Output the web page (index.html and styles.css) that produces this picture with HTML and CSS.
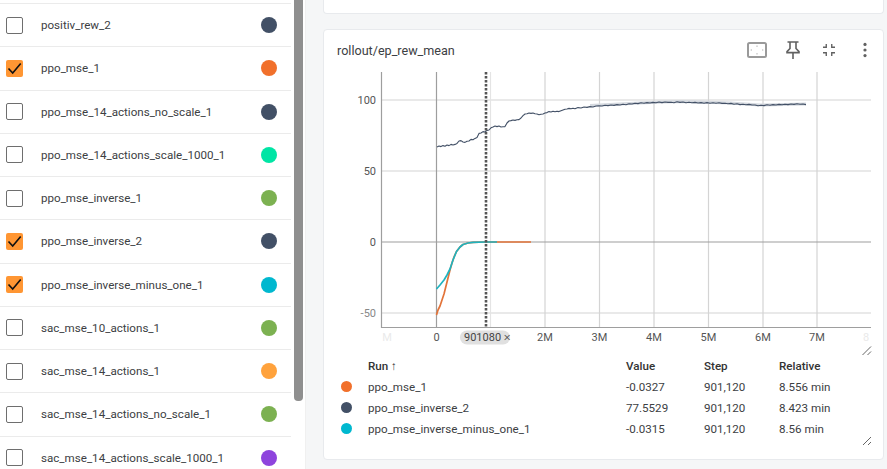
FILE: index.html
```html
<!DOCTYPE html>
<html lang="en">
<head>
    <meta charset="UTF-8">
    <title>TensorBoard Scalars</title>
    <link rel="stylesheet" href="styles.css">
</head>
<body>
    <aside class="runs">
        <div class="run"><span class="box"></span><span class="run-name">positiv_rew_2</span><span class="dot c-slate"></span></div>
        <div class="run"><span class="box on"><svg viewBox="0 0 17 17"><path d="M2.5 8.5l4.2 4.6 8-9.6"/></svg></span><span class="run-name">ppo_mse_1</span><span class="dot c-orange"></span></div>
        <div class="run"><span class="box"></span><span class="run-name">ppo_mse_14_actions_no_scale_1</span><span class="dot c-slate"></span></div>
        <div class="run"><span class="box"></span><span class="run-name">ppo_mse_14_actions_scale_1000_1</span><span class="dot c-mint"></span></div>
        <div class="run"><span class="box"></span><span class="run-name">ppo_mse_inverse_1</span><span class="dot c-green"></span></div>
        <div class="run"><span class="box on"><svg viewBox="0 0 17 17"><path d="M2.5 8.5l4.2 4.6 8-9.6"/></svg></span><span class="run-name">ppo_mse_inverse_2</span><span class="dot c-slate"></span></div>
        <div class="run"><span class="box on"><svg viewBox="0 0 17 17"><path d="M2.5 8.5l4.2 4.6 8-9.6"/></svg></span><span class="run-name">ppo_mse_inverse_minus_one_1</span><span class="dot c-cyan"></span></div>
        <div class="run"><span class="box"></span><span class="run-name">sac_mse_10_actions_1</span><span class="dot c-green"></span></div>
        <div class="run"><span class="box"></span><span class="run-name">sac_mse_14_actions_1</span><span class="dot c-amber"></span></div>
        <div class="run"><span class="box"></span><span class="run-name">sac_mse_14_actions_no_scale_1</span><span class="dot c-green"></span></div>
        <div class="run"><span class="box"></span><span class="run-name">sac_mse_14_actions_scale_1000_1</span><span class="dot c-purple"></span></div>
    </aside>
    <div class="scrollbar"><div class="thumb"></div></div>

    <main class="main">
        <div class="card card-stub"></div>

        <section class="card card-chart">
            <header class="card-head">
                <h2 class="card-title">rollout/ep_rew_mean</h2>
                <div class="tools">
                    <svg class="tool tool-fit" viewBox="0 0 20 16">
                        <rect x="1" y="1" width="18" height="14" rx="1.5" class="fit-frame"/>
                        <path class="fit-arrows" d="M9 4.4h2L10 3.2zM9 11.6h2L10 12.8zM4.6 7v2L3.4 8zM15.4 7v2L16.6 8z"/>
                    </svg>
                    <svg class="tool tool-pin" viewBox="0 0 14 18">
                        <path class="pin" d="M1.5 1h11M4 1v6.5L1 10.6v1h12v-1L10 7.5V1M7 11.6V18"/>
                    </svg>
                    <svg class="tool tool-exit" viewBox="5 5 14 14">
                        <path d="M5 16h3v3h1.6v-4.6H5zM8 8H5v1.6h4.6V5H8zM14.4 19H16v-3h3v-1.6h-4.6zM16 8V5h-1.6v4.6H19V8z"/>
                    </svg>
                    <svg class="tool tool-more" viewBox="0 0 4 16">
                        <circle cx="2" cy="2.4" r="1.6"/><circle cx="2" cy="8" r="1.6"/><circle cx="2" cy="13.6" r="1.6"/>
                    </svg>
                </div>
            </header>

            <svg class="plot" viewBox="324 70 559 285">
                <g class="grid">
                    <path d="M381.5 100H871M381.5 171H871M381.5 313H871"/>
                    <path class="grid-near" d="M490.5 72V327"/>
                    <path d="M545 72V327M599.5 72V327M654 72V327M708.5 72V327M763 72V327M817 72V327"/>
                </g>
                <g class="axis">
                    <path d="M381.5 72V327.5H871M436.5 72V327M381.5 242H871"/>
                </g>
                <g class="y-labels">
                    <text x="376" y="104">100</text>
                    <text x="376" y="175">50</text>
                    <text x="376" y="246">0</text>
                    <text x="376" y="317" class="faint">-50</text>
                </g>
                <g class="x-labels">
                    <text x="387" y="341" class="ghost">M</text>
                    <text x="436.5" y="341">0</text>
                    <text x="545" y="341">2M</text>
                    <text x="599.5" y="341">3M</text>
                    <text x="654" y="341">4M</text>
                    <text x="708.5" y="341">5M</text>
                    <text x="763" y="341">6M</text>
                    <text x="817" y="341">7M</text>
                    <text x="866" y="341" class="ghost">8</text>
                </g>

                <path class="line line-slate-soft" d="M590 105.5 620 104 650 102.5 680 101.5 700 102 730 103 760 105 806 104"/>
                <path class="line line-slate" d="M437 147 439 146 441 146.6 443 145.6 445 146.2 447 145 449 145.6 451 144.4 453 145 455 144.4 457 143.4 459 141 461 140.6 463 142 465 142.4 467 141.2 469 141 471 139.4 473 139.8 475 138.4 477 137.4 479 133.4 481 133 483 131.6 485 132 487 130.4 489 130 491 127.8 493 127 495 126 497 126.6 499 126 501 127 503 126.8 505 126.6 507 123 509 121 511 120.6 513 120 515 120.4 517 119.8 519 119.6 521 118 523 115.6 525 114 527 113.8 529 113 531 113.4 533 113 535 113.8 537 114 539 114.8 541 114.2 543 114 545 113 547 112.6 549 111.6 551 112 553 111.2 555 111.8 557 111.2 559 111.6 561 110.8 563 110 565 109.2 567 109 569 108.4 571 108.8 573 108.2 575 108.8 578 107.6 581 108 584 107 587 107.4 590 106.6 593 107 596 106 599 105.8 602 106 605 105.2 608 105.6 611 105 614 105.4 617 104.6 620 105 623 104.2 626 104.8 629 103.8 632 104 635 103.2 638 103.6 641 102.8 644 103.2 647 102.6 650 103 653 102.4 656 102.8 659 102 662 102.6 665 102 668 102.4 671 102.2 674 102.8 677 101.8 680 102.4 683 102 686 102.8 689 102.2 692 102.8 695 102.4 698 103 701 102.6 704 103.2 707 102.6 710 103.2 713 102.8 716 103.2 719 102.8 722 103.4 725 103.2 728 103.8 731 103.4 734 104.2 737 103.8 740 104.6 743 104.2 746 104.8 749 104.4 752 105 755 105 758 105.8 761 105.2 764 105.6 767 104.8 770 105.2 773 104.6 776 105 779 104.4 782 104.8 785 104.2 788 104.6 791 104 794 104.4 797 103.8 800 104.2 803 104 806 104.6"/>
                <path class="line line-orange" d="M436.5 315 438 310 440 306 442 300 444 294 446 286 448 278 450 270 452 263 454 257 456.5 251.5 460 247 463 244.5 468 243 473 242.4 485 242 531 242"/>
                <path class="line line-cyan" d="M436.5 289 440 285 444 280 447 275 450 269 453 260 456.5 251.5 460 247 463 244.5 468 243 473 242.4 485 242 497 242"/>
                <path class="cursor" d="M486 72V327"/>

                <rect x="460" y="330.5" width="50" height="14" rx="7" class="chip"/>
                <text x="464" y="341" class="chip-text">901080 <tspan class="chip-x">×</tspan></text>

                <path class="grip" d="M862.5 355 871 346.5M867.5 355 871 351.5"/>
            </svg>

            <div class="table">
                <div class="tr th"><span></span><span>Run ↑</span><span>Value</span><span>Step</span><span>Relative</span></div>
                <div class="tr"><span class="dot-sm c-orange"></span><span>ppo_mse_1</span><span>-0.0327</span><span>901,120</span><span>8.556 min</span></div>
                <div class="tr"><span class="dot-sm c-slate"></span><span>ppo_mse_inverse_2</span><span>77.5529</span><span>901,120</span><span>8.423 min</span></div>
                <div class="tr"><span class="dot-sm c-cyan"></span><span>ppo_mse_inverse_minus_one_1</span><span>-0.0315</span><span>901,120</span><span>8.56 min</span></div>
            </div>
            <svg class="grip-table" viewBox="0 0 10 10"><path class="grip" d="M1 9 9 1M6 9 9 6"/></svg>
        </section>
    </main>
</body>
</html>
```

FILE: styles.css
```css
html, body {
    margin: 0;
    height: 469px;
    overflow: hidden;
}
body {
    display: flex;
    font-family: Roboto, "Liberation Sans", sans-serif;
    font-size: 12px;
    color: #3c4043;
    background-color: #fff;
}

/* run list */
.runs {
    width: 291px;
    flex: none;
    padding-top: 3px;
    box-sizing: border-box;
}
.run {
    display: flex;
    align-items: center;
    height: 43.25px;
    flex: none;
    box-sizing: border-box;
    padding: 0 14px 0 6px;
    border-top: 1px solid #ebebeb;
}
.box {
    width: 17px;
    height: 17px;
    flex: none;
    box-sizing: border-box;
    border: 1px solid #6e6e6e;
    border-radius: 2px;
}
.box.on {
    background-color: #ff9633;
    border: none;
}
.box svg {
    display: block;
    width: 17px;
    height: 17px;
}
.box path {
    fill: none;
    stroke: #111;
    stroke-width: 1.6;
}
.run-name {
    flex: 1;
    margin-left: 18px;
    font-size: 11.6px;
}
.dot {
    width: 16px;
    height: 16px;
    flex: none;
    border-radius: 50%;
}
.c-slate { background-color: #425066; }
.c-orange { background-color: #f1702b; }
.c-mint { background-color: #00e5a5; }
.c-green { background-color: #7cb151; }
.c-cyan { background-color: #00b8cf; }
.c-amber { background-color: #ffa23c; }
.c-purple { background-color: #8e44dd; }

.scrollbar {
    width: 15px;
    flex: none;
    padding-left: 3px;
    box-sizing: border-box;
    border-right: 1px solid #f0f0f0;
}
.thumb {
    width: 9px;
    height: 401px;
    background-color: #8f8f8f;
    border-radius: 0 0 4px 4px;
}

/* cards */
.main {
    flex: 1;
    padding: 0 3px 0 17px;
    background-color: #f5f6f7;
}
.card {
    background-color: #fff;
    border: 1px solid #e8eaed;
    border-radius: 4px;
    box-sizing: border-box;
}
.card-stub {
    height: 14px;
    border-top: none;
    border-radius: 0 0 4px 4px;
}
.card-chart {
    position: relative;
    height: 431px;
    margin-top: 15px;
    display: flex;
    flex-direction: column;
}
.card-head {
    display: flex;
    align-items: center;
    justify-content: space-between;
    height: 40px;
    flex: none;
    padding: 0 16px 0 13px;
    box-sizing: border-box;
}
.card-title {
    margin: 0;
    font-size: 12.6px;
    font-weight: 400;
    color: #3c4043;
}
.tools {
    display: flex;
    align-items: center;
}
.tool {
    display: block;
    flex: none;
}
.tool-fit { width: 20px; height: 16px; }
.tool-pin { width: 14px; height: 18px; margin-left: 19px; }
.tool-exit { width: 12px; height: 12px; margin-left: 23px; fill: #616161; }
.tool-more { width: 4px; height: 16px; margin-left: 28px; fill: #616161; }
.fit-frame {
    fill: #fff;
    stroke: #9a9a9a;
    stroke-width: 2;
}
.fit-arrows { fill: #a8a8a8; }
.pin {
    fill: none;
    stroke: #616161;
    stroke-width: 1.6;
}

/* chart */
.plot {
    display: block;
    width: 559px;
    height: 285px;
    flex: none;
}
.plot text {
    font-family: Roboto, "Liberation Sans", sans-serif;
    font-size: 11px;
    fill: #555;
}
.grid path {
    fill: none;
    stroke: #d4d4d4;
    stroke-width: 1.2;
}
.grid .grid-near { stroke: #e4e4e4; }
.axis path {
    fill: none;
    stroke: #9e9e9e;
    stroke-width: 1.2;
}
.y-labels text { text-anchor: end; }
.x-labels text { text-anchor: middle; }
.plot .faint { fill: #888; }
.plot .ghost { fill: #eaeaea; }
.line {
    fill: none;
    stroke-linejoin: round;
}
.line-slate { stroke: #425066; stroke-width: 1.1; }
.line-slate-soft { stroke: #d5d9df; stroke-width: 3; }
.line-orange { stroke: #e2743a; stroke-width: 1.7; }
.line-cyan { stroke: #1fb3bf; stroke-width: 1.7; }
.cursor {
    fill: none;
    stroke: #555;
    stroke-width: 2.6;
    stroke-dasharray: 2.4 1.6;
}
.chip { fill: #e0e0e0; }
.plot .chip-text { fill: #444; font-size: 11px; }
.plot .chip-x { font-size: 13px; font-weight: 300; }
.grip {
    fill: none;
    stroke: #666;
    stroke-width: 1;
}

/* tooltip table */
.tr {
    display: grid;
    grid-template-columns: 27px 258px 78px 75px 1fr;
    align-items: center;
    height: 21px;
    padding-left: 17px;
    font-size: 11.6px;
    color: #3c4043;
}
.th {
    font-weight: 500;
    color: #333;
}
.dot-sm {
    width: 11px;
    height: 11px;
    border-radius: 50%;
}
.grip-table {
    position: absolute;
    right: 11px;
    bottom: 13px;
    width: 10px;
    height: 10px;
}
```
